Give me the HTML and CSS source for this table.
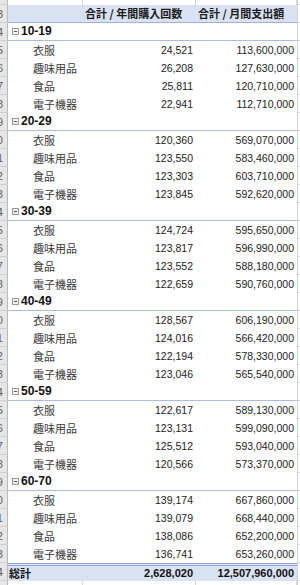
FILE: index.html
```html
<!DOCTYPE html>
<html lang="ja">
<head>
<meta charset="utf-8">
<link rel="stylesheet" href="styles.css">
</head>
<body>
<div class="sheet">
  <div class="row edge top"><div class="rn"></div><div class="g"></div><div class="g"></div><div class="g"></div><div class="xr"></div></div>

  <div class="row head"><div class="rn"><span>3</span></div><div class="c"></div><div class="c hd">合計 / 年間購入回数</div><div class="c hd">合計 / 月間支出額</div><div class="xr"></div></div>

  <div class="row grp"><div class="rn"><span>4</span></div><div class="c lab"><i class="tog"></i>10-19</div><div class="c"></div><div class="c"></div><div class="xr"></div></div>
  <div class="row"><div class="rn"><span>5</span></div><div class="c ch">衣服</div><div class="c n">24,521</div><div class="c n">113,600,000</div><div class="xr"></div></div>
  <div class="row"><div class="rn"><span>6</span></div><div class="c ch">趣味用品</div><div class="c n">26,208</div><div class="c n">127,630,000</div><div class="xr"></div></div>
  <div class="row"><div class="rn"><span>7</span></div><div class="c ch">食品</div><div class="c n">25,811</div><div class="c n">120,710,000</div><div class="xr"></div></div>
  <div class="row"><div class="rn"><span>8</span></div><div class="c ch">電子機器</div><div class="c n">22,941</div><div class="c n">112,710,000</div><div class="xr"></div></div>

  <div class="row grp"><div class="rn"><span>9</span></div><div class="c lab"><i class="tog"></i>20-29</div><div class="c"></div><div class="c"></div><div class="xr"></div></div>
  <div class="row"><div class="rn"><span>10</span></div><div class="c ch">衣服</div><div class="c n">120,360</div><div class="c n">569,070,000</div><div class="xr"></div></div>
  <div class="row"><div class="rn"><span>11</span></div><div class="c ch">趣味用品</div><div class="c n">123,550</div><div class="c n">583,460,000</div><div class="xr"></div></div>
  <div class="row"><div class="rn"><span>12</span></div><div class="c ch">食品</div><div class="c n">123,303</div><div class="c n">603,710,000</div><div class="xr"></div></div>
  <div class="row"><div class="rn"><span>13</span></div><div class="c ch">電子機器</div><div class="c n">123,845</div><div class="c n">592,620,000</div><div class="xr"></div></div>

  <div class="row grp"><div class="rn"><span>14</span></div><div class="c lab"><i class="tog"></i>30-39</div><div class="c"></div><div class="c"></div><div class="xr"></div></div>
  <div class="row"><div class="rn"><span>15</span></div><div class="c ch">衣服</div><div class="c n">124,724</div><div class="c n">595,650,000</div><div class="xr"></div></div>
  <div class="row"><div class="rn"><span>16</span></div><div class="c ch">趣味用品</div><div class="c n">123,817</div><div class="c n">596,990,000</div><div class="xr"></div></div>
  <div class="row"><div class="rn"><span>17</span></div><div class="c ch">食品</div><div class="c n">123,552</div><div class="c n">588,180,000</div><div class="xr"></div></div>
  <div class="row"><div class="rn"><span>18</span></div><div class="c ch">電子機器</div><div class="c n">122,659</div><div class="c n">590,760,000</div><div class="xr"></div></div>

  <div class="row grp"><div class="rn"><span>19</span></div><div class="c lab"><i class="tog"></i>40-49</div><div class="c"></div><div class="c"></div><div class="xr"></div></div>
  <div class="row"><div class="rn"><span>20</span></div><div class="c ch">衣服</div><div class="c n">128,567</div><div class="c n">606,190,000</div><div class="xr"></div></div>
  <div class="row"><div class="rn"><span>21</span></div><div class="c ch">趣味用品</div><div class="c n">124,016</div><div class="c n">566,420,000</div><div class="xr"></div></div>
  <div class="row"><div class="rn"><span>22</span></div><div class="c ch">食品</div><div class="c n">122,194</div><div class="c n">578,330,000</div><div class="xr"></div></div>
  <div class="row"><div class="rn"><span>23</span></div><div class="c ch">電子機器</div><div class="c n">123,046</div><div class="c n">565,540,000</div><div class="xr"></div></div>

  <div class="row grp"><div class="rn"><span>24</span></div><div class="c lab"><i class="tog"></i>50-59</div><div class="c"></div><div class="c"></div><div class="xr"></div></div>
  <div class="row"><div class="rn"><span>25</span></div><div class="c ch">衣服</div><div class="c n">122,617</div><div class="c n">589,130,000</div><div class="xr"></div></div>
  <div class="row"><div class="rn"><span>26</span></div><div class="c ch">趣味用品</div><div class="c n">123,131</div><div class="c n">599,090,000</div><div class="xr"></div></div>
  <div class="row"><div class="rn"><span>27</span></div><div class="c ch">食品</div><div class="c n">125,512</div><div class="c n">593,040,000</div><div class="xr"></div></div>
  <div class="row"><div class="rn"><span>28</span></div><div class="c ch">電子機器</div><div class="c n">120,566</div><div class="c n">573,370,000</div><div class="xr"></div></div>

  <div class="row grp"><div class="rn"><span>29</span></div><div class="c lab"><i class="tog"></i>60-70</div><div class="c"></div><div class="c"></div><div class="xr"></div></div>
  <div class="row"><div class="rn"><span>30</span></div><div class="c ch">衣服</div><div class="c n">139,174</div><div class="c n">667,860,000</div><div class="xr"></div></div>
  <div class="row"><div class="rn"><span>31</span></div><div class="c ch">趣味用品</div><div class="c n">139,079</div><div class="c n">668,440,000</div><div class="xr"></div></div>
  <div class="row"><div class="rn"><span>32</span></div><div class="c ch">食品</div><div class="c n">138,086</div><div class="c n">652,200,000</div><div class="xr"></div></div>
  <div class="row"><div class="rn"><span>33</span></div><div class="c ch">電子機器</div><div class="c n">136,741</div><div class="c n">653,260,000</div><div class="xr"></div></div>

  <div class="row tot"><div class="rn"><span>34</span></div><div class="c tl">総計</div><div class="c n b">2,628,020</div><div class="c n b">12,507,960,000</div><div class="xr"></div></div>

  <div class="row edge bot"><div class="rn"></div><div class="g"></div><div class="g"></div><div class="g"></div><div class="xr"></div></div>
</div>
</body>
</html>
```

FILE: styles.css
```css
html, body {
  margin: 0;
  padding: 0;
  background: #ffffff;
}
body {
  width: 300px;
  height: 585px;
  overflow: hidden;
  font-family: "Noto Sans CJK JP", "Noto Sans", sans-serif;
  font-size: 11px;
  color: #222222;
}
.sheet {
  display: flex;
  flex-direction: column;
}
.row {
  display: grid;
  grid-template-columns: 8px 75px 113px 101px 3px;
  height: 18px;
  flex: none;
}
.row.top { height: 5px; }
.row.bot { height: 10px; }

.rn {
  box-sizing: border-box;
  background: #e6e6e6;
  border-right: 1px solid #b9b9b9;
  border-bottom: 1px solid #d0d0d0;
  display: flex;
  justify-content: flex-end;
  align-items: center;
  overflow: hidden;
  font-family: "Liberation Sans", sans-serif;
  font-size: 11px;
  color: #606060;
}
.rn span {
  margin-right: 4px;
  white-space: nowrap;
}
.xr {
  box-sizing: border-box;
  border-left: 1px solid #d4d4d4;
  border-bottom: 1px solid #d4d4d4;
}
.g {
  box-sizing: border-box;
  border-right: 1px solid #d4d4d4;
}
.g:last-of-type { border-right: none; }

.c {
  box-sizing: border-box;
  line-height: 18px;
  white-space: nowrap;
  overflow: hidden;
  background: #ffffff;
}
.head .c {
  background: #d9e1f2;
  border-bottom: 1px solid #9db3dc;
  line-height: 17px;
}
.hd {
  font-weight: bold;
  padding-left: 2px;
  color: #1a1a1a;
}
.grp .c {
  border-bottom: 1px solid #a9bce2;
  line-height: 17px;
}
.lab {
  display: flex;
  align-items: center;
  font-family: "Liberation Sans", sans-serif;
  font-weight: bold;
  font-size: 12px;
  color: #111111;
}
.tog {
  box-sizing: border-box;
  width: 7px;
  height: 7px;
  border: 1px solid #9a9a9a;
  background: #f2f2f2;
  margin: 0 2px 0 4px;
  display: flex;
  align-items: center;
  justify-content: center;
}
.tog::before {
  content: "";
  width: 3px;
  height: 1px;
  background: #555555;
}
.ch {
  padding-left: 25px;
  color: #3a3a3a;
}
.n {
  text-align: right;
  padding-right: 3px;
  font-family: "Liberation Sans", sans-serif;
  font-size: 10.5px;
  color: #222222;
}
.b {
  font-weight: bold;
  font-size: 11px;
  color: #111111;
}
.tot .c {
  background: #d9e1f2;
  border-top: 3px double #8eaadb;
  line-height: 14px;
}
.tl {
  font-weight: bold;
  padding-left: 1px;
  color: #111111;
}
```
